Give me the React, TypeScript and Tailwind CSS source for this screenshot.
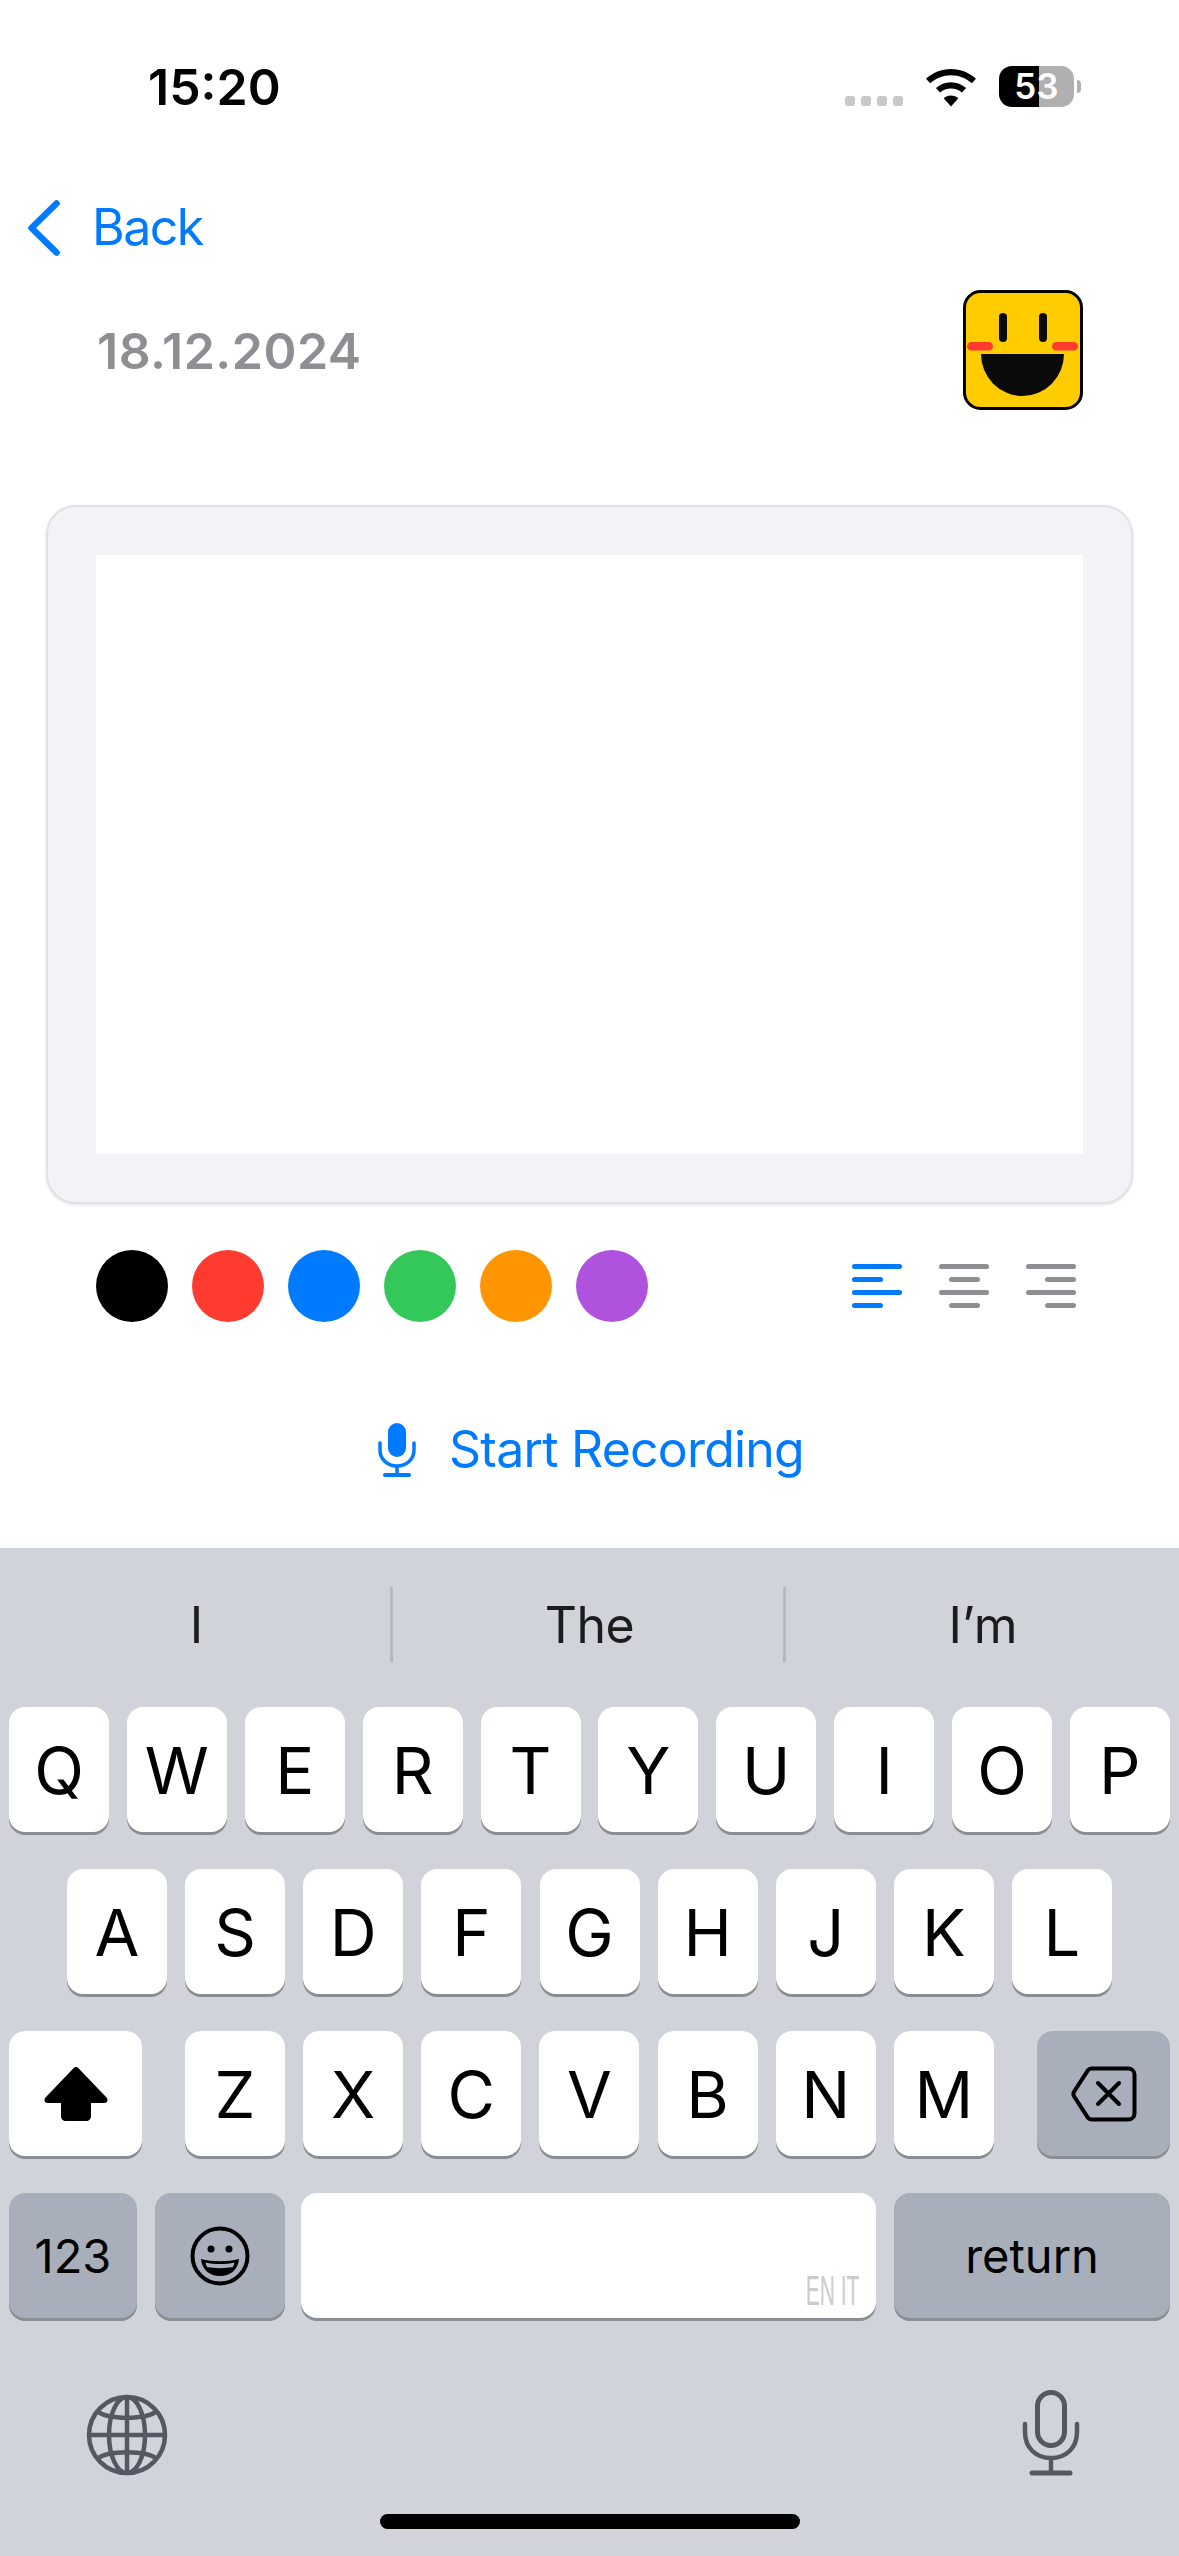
import React from "react";

const ROW_ONE = ["Q", "W", "E", "R", "T", "Y", "U", "I", "O", "P"];
const ROW_TWO = ["A", "S", "D", "F", "G", "H", "J", "K", "L"];
const ROW_THREE = ["Z", "X", "C", "V", "B", "N", "M"];
const COLORS = ["bg-[#000000]", "bg-[#ff3b30]", "bg-[#007aff]", "bg-[#34c759]", "bg-[#ff9500]", "bg-[#af52de]"];

const Key = ({ children, className = "" }: { children?: React.ReactNode; className?: string }) => (
  <div
    className={`h-[125px] rounded-[16px] flex items-center justify-center shadow-[0_3px_0_#8b8d94] text-black ${className}`}
  >
    {children}
  </div>
);

const Letter = ({ label }: { label: string }) => (
  <Key className="w-[100px] bg-white text-[65px] font-normal pt-[3px]">{label}</Key>
);

const Wifi = () => (
  <svg width="52" height="38" viewBox="0 0 52 38" fill="#000">
    <path d="M26 0C16.500 0 7.700 3.700 1 9.700L5.200 14.200C10.700 9.200 18 6.200 26 6.200C34 6.200 41.300 9.200 46.800 14.200L51 9.700C44.300 3.700 35.500 0 26 0Z" />
    <path d="M26 13.300C20.200 13.300 15 15.500 10.900 19.100L15.100 23.600C18 21 21.800 19.500 26 19.500C30.200 19.500 34 21 36.900 23.600L41.100 19.100C37 15.500 31.800 13.300 26 13.300Z" />
    <path d="M26 26.500C23.200 26.500 20.700 27.500 18.700 29.200L26 37.500L33.300 29.200C31.300 27.500 28.800 26.500 26 26.500Z" />
  </svg>
);

const Smiley = () => (
  <svg width="120" height="120" viewBox="0 0 120 120">
    <rect x="1.500" y="1.500" width="117" height="117" rx="16" fill="#ffcc00" stroke="#000" strokeWidth="3" />
    <rect x="36" y="23" width="8" height="29" rx="4" fill="#0a0a0a" />
    <rect x="76" y="23" width="8" height="29" rx="4" fill="#0a0a0a" />
    <rect x="4" y="52" width="26" height="8.500" rx="4.250" fill="#ff3b30" />
    <rect x="89" y="52" width="26" height="8.500" rx="4.250" fill="#ff3b30" />
    <path d="M18 64H101A41.500 42 0 0 1 18 64Z" fill="#0a0a0a" />
  </svg>
);

const AlignIcon = ({ active, align }: { active?: boolean; align: string }) => {
  const color = active ? "bg-[#007aff]" : "bg-[#8e8e93]";
  return (
    <div className={`w-[50px] flex flex-col gap-[8.500px] ${align}`}>
      <div className={`w-[50px] h-[4.500px] rounded-full ${color}`} />
      <div className={`w-[31px] h-[4.500px] rounded-full ${color}`} />
      <div className={`w-[50px] h-[4.500px] rounded-full ${color}`} />
      <div className={`w-[31px] h-[4.500px] rounded-full ${color}`} />
    </div>
  );
};

const BlueMic = () => (
  <svg width="38" height="54" viewBox="0 0 38 54" fill="none">
    <rect x="10" y="0" width="18" height="34" rx="9" fill="#007aff" />
    <path d="M2 20V27C2 36.400 9.600 43 19 43C28.400 43 36 36.400 36 27V20" stroke="#007aff" strokeWidth="3.500" strokeLinecap="round" />
    <path d="M19 43V51" stroke="#007aff" strokeWidth="3.500" />
    <path d="M7 52H31" stroke="#007aff" strokeWidth="4" strokeLinecap="round" />
  </svg>
);

const ShiftIcon = () => (
  <svg width="64" height="54" viewBox="0 0 64 54" fill="#000">
    <path d="M29.500 1.200C30.900 -0.300 33.100 -0.300 34.500 1.200L62.500 30.500C64.500 32.600 63.500 36 60.500 36H47V49C47 52 45 54 42 54H22C19 54 17 52 17 49V36H3.500C0.500 36 -0.500 32.600 1.500 30.500Z" />
  </svg>
);

const DeleteIcon = () => (
  <svg width="66" height="56" viewBox="0 0 66 56" fill="none" stroke="#000" strokeLinecap="round" strokeLinejoin="round">
    <path d="M21 2.500H57C60.500 2.500 63.500 5 63.500 8.500V47.500C63.500 51 60.500 53.500 57 53.500H21C19.400 53.500 18 52.800 17 51.800L3.500 31C2 29 2 27 3.500 25L17 4.200C18 3.200 19.400 2.500 21 2.500Z" strokeWidth="4" />
    <path d="M27 17L48 38M48 17L27 38" strokeWidth="4" />
  </svg>
);

const EmojiIcon = () => (
  <svg width="60" height="60" viewBox="0 0 60 60" fill="none">
    <circle cx="30" cy="30" r="27.500" stroke="#000" strokeWidth="4" />
    <circle cx="21" cy="23" r="3.500" fill="#000" />
    <circle cx="39" cy="23" r="3.500" fill="#000" />
    <path d="M11 33C22 36 38 36 49 33C48 44 40 50 30 50C20 50 12 44 11 33Z" fill="#000" />
    <path d="M15.500 36.500C24 38.500 36 38.500 44.500 36.500C44 38.500 43.600 39.800 43 41C35 42.500 25 42.500 17 41C16.400 39.800 16 38.500 15.500 36.500Z" fill="#a9afba" />
  </svg>
);

const GlobeIcon = () => (
  <svg width="82" height="82" viewBox="0 0 82 82" fill="none" stroke="#545862" strokeWidth="4.500">
    <circle cx="41" cy="41" r="38" />
    <ellipse cx="41" cy="41" rx="18" ry="38" />
    <path d="M41 3V79M3 41H79" />
    <path d="M11 17C22 26 60 26 71 17M11 65C22 56 60 56 71 65" />
  </svg>
);

const KeyboardMic = () => (
  <svg width="58" height="86" viewBox="0 0 58 86" fill="none" stroke="#545862" strokeLinecap="round">
    <rect x="15.500" y="2.500" width="27" height="53" rx="13.500" strokeWidth="5" />
    <path d="M3 34V42C3 58 14 68 29 68C44 68 55 58 55 42V34" strokeWidth="4.500" />
    <path d="M29 68V83" strokeWidth="4.500" strokeLinecap="butt" />
    <path d="M10 83H48" strokeWidth="5" />
  </svg>
);

export default function App() {
  return (
    <div className="w-[1179px] h-[2556px] bg-white flex flex-col overflow-hidden font-['Inter',sans-serif]">
      {/* status bar */}
      <div className="h-[180px] flex justify-between items-start pt-[62px] pl-[148px] pr-[98px]">
        <span className="text-[50px] leading-[50px] font-semibold text-black">15:20</span>
        <div className="flex items-start pt-[7px]">
          <div className="flex gap-[6px] mt-[27px] mr-[22px]">
            <div className="w-[10px] h-[10px] rounded-[3px] bg-[#c8c8c8]" />
            <div className="w-[10px] h-[10px] rounded-[3px] bg-[#c8c8c8]" />
            <div className="w-[10px] h-[10px] rounded-[3px] bg-[#c8c8c8]" />
            <div className="w-[10px] h-[10px] rounded-[3px] bg-[#c8c8c8]" />
          </div>
          <Wifi />
          <div className="flex items-center gap-[3px] -mt-[3px] ml-[22px]">
            <div className="w-[75px] h-[41px] rounded-[13px] bg-[linear-gradient(90deg,#000_53%,#b0b0b0_53%)] text-white text-[35px] font-semibold flex items-center justify-center">
              53
            </div>
            <div className="w-[4px] h-[13px] rounded-r-full bg-[#b0b0b0]" />
          </div>
        </div>
      </div>

      {/* back */}
      <div className="h-[95px] flex items-center pl-[28px] gap-[32px]">
        <svg width="32" height="56" viewBox="0 0 32 56" fill="none">
          <path d="M28.500 3.500L3.500 28L28.500 52.500" stroke="#007aff" strokeWidth="6.500" strokeLinecap="round" strokeLinejoin="round" />
        </svg>
        <span className="text-[50px] text-[#007aff] tracking-[-1.500px]">Back</span>
      </div>

      {/* date */}
      <div className="h-[230px] flex justify-between items-start pt-[15px] pl-[97px] pr-[96px]">
        <span className="text-[50px] leading-[50px] mt-[36px] font-semibold text-[#8e8e93] tracking-[0.5px]">18.12.2024</span>
        <Smiley />
      </div>

      {/* canvas */}
      <div className="mx-[46px] h-[699px] p-[48px] rounded-[30px] bg-[#f2f2f7] border-2 border-[#e2e2e6] shadow-[0_1px_3px_rgba(0,0,0,0.12)]">
        <div className="w-full h-full bg-white" />
      </div>

      {/* color and alignment */}
      <div className="h-[72px] mt-[46px] pl-[96px] pr-[103px] flex justify-between items-center">
        <div className="flex gap-[24px]">
          {COLORS.map((color) => (
            <div key={color} className={`w-[72px] h-[72px] rounded-full ${color}`} />
          ))}
        </div>
        <div className="flex gap-[37px]">
          <AlignIcon active align="items-start" />
          <AlignIcon align="items-center" />
          <AlignIcon align="items-end" />
        </div>
      </div>

      {/* record */}
      <div className="h-[54px] mt-[101px] flex justify-center items-center gap-[33px] pl-[3px]">
        <BlueMic />
        <span className="text-[50px] leading-[54px] -mt-[2px] text-[#007aff] tracking-[-0.8px]">Start Recording</span>
      </div>

      {/* keyboard */}
      <div className="mt-[71px] flex-1 bg-[#d0d3da] flex flex-col">
        <div className="h-[159px] pt-[39px] flex">
          <div className="w-[390px] h-[75px] pt-[2px] pl-[3px] flex items-center justify-center text-[50px] text-[#1c1c1e]">I</div>
          <div className="w-[3px] h-[75px] bg-[#b6b9c0]" />
          <div className="w-[390px] h-[75px] pt-[2px] pl-[3px] flex items-center justify-center text-[50px] text-[#1c1c1e] tracking-[-0.5px]">The</div>
          <div className="w-[3px] h-[75px] bg-[#b6b9c0]" />
          <div className="w-[393px] h-[75px] pt-[2px] pl-[1px] flex items-center justify-center text-[50px] text-[#1c1c1e]">I’m</div>
        </div>

        <div className="flex flex-col gap-[37px]">
          <div className="flex justify-between px-[9px]">
            {ROW_ONE.map((k) => (
              <Letter key={k} label={k} />
            ))}
          </div>
          <div className="flex justify-between pl-[67px] pr-[67px]">
            {ROW_TWO.map((k) => (
              <Letter key={k} label={k} />
            ))}
          </div>
          <div className="flex justify-between px-[9px]">
            <Key className="w-[133px] bg-white">
              <ShiftIcon />
            </Key>
            <div className="flex justify-between w-[809px]">
              {ROW_THREE.map((k) => (
                <Letter key={k} label={k} />
              ))}
            </div>
            <Key className="w-[133px] bg-[#a9afba]">
              <DeleteIcon />
            </Key>
          </div>
          <div className="flex px-[9px]">
            <Key className="w-[128px] bg-[#a9afba] text-[47px] pt-[2px]">123</Key>
            <Key className="w-[130px] ml-[18px] bg-[#a9afba]">
              <EmojiIcon />
            </Key>
            <Key className="w-[575px] ml-[16px] bg-white !items-end !justify-end pr-[17px] pb-[6px]">
              <span className="text-[42px] leading-[42px] font-['Liberation_Sans',sans-serif] text-[#cccccc] origin-right scale-x-[0.5] whitespace-nowrap">
                EN IT
              </span>
            </Key>
            <Key className="w-[276px] ml-[18px] bg-[#a9afba] text-[47px] pt-[2px]">return</Key>
          </div>
        </div>

        <div className="flex justify-between items-start mt-[72px] pl-[86px] pr-[99px]">
          <div className="mt-[4px]">
            <GlobeIcon />
          </div>
          <KeyboardMic />
        </div>
        <div className="w-[420px] h-[15px] mx-auto mt-[38px] rounded-full bg-black" />
      </div>
    </div>
  );
}
